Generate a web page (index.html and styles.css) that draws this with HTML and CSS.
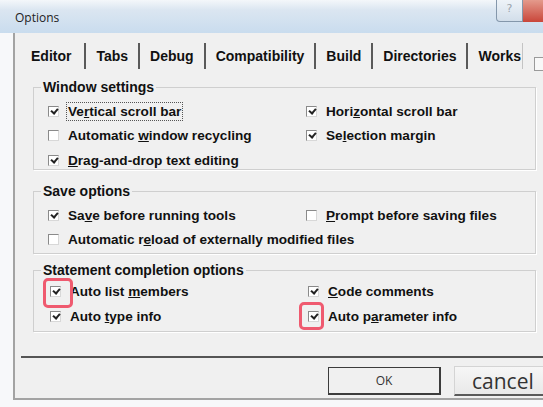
FILE: index.html
```html
<!DOCTYPE html>
<html lang="en">

<head>
    <meta charset="UTF-8">
    <meta name="viewport" content="width=device-width, initial-scale=1.0">
    <title>Options</title>
    <link rel="stylesheet" href="styles.css">
</head>

<body>
    <div class="window">
        <div class="titlebar">
            <span class="title">Options</span>
            <div class="caption-buttons">
                <span class="help-btn">?</span>
                <span class="close-btn"></span>
            </div>
        </div>

        <div class="dialog">
            <div class="tab-strip">
                <div class="tabs">
                    <span class="tab">Editor</span>
                    <span class="tab">Tabs</span>
                    <span class="tab">Debug</span>
                    <span class="tab">Compatibility</span>
                    <span class="tab">Build</span>
                    <span class="tab">Directories</span>
                    <span class="tab last">Works</span>
                </div>
                <span class="tab-scroll"></span>
            </div>

            <div class="page">
                <fieldset class="group window-group">
                    <legend>Window settings</legend>
                    <div class="options">
                        <label class="option"><span class="box checked"></span><span class="focus">Ve<u>r</u>tical scroll bar</span></label>
                        <label class="option"><span class="box checked"></span><span>Hori<u>z</u>ontal scroll bar</span></label>
                        <label class="option"><span class="box"></span><span>Automatic <u>w</u>indow recycling</span></label>
                        <label class="option"><span class="box checked"></span><span>Se<u>l</u>ection margin</span></label>
                        <label class="option"><span class="box checked"></span><span><u>D</u>rag-and-drop text editing</span></label>
                    </div>
                </fieldset>

                <fieldset class="group save-group">
                    <legend>Save options</legend>
                    <div class="options">
                        <label class="option"><span class="box checked"></span><span>Sa<u>v</u>e before running tools</span></label>
                        <label class="option"><span class="box"></span><span><u>P</u>rompt before saving files</span></label>
                        <label class="option wide"><span class="box"></span><span>Automatic r<u>e</u>load of externally modified files</span></label>
                    </div>
                </fieldset>

                <fieldset class="group statement-group">
                    <legend>Statement completion options</legend>
                    <div class="options">
                        <label class="option"><span class="box checked marked-a"></span><span>Auto list <u>m</u>embers</span></label>
                        <label class="option"><span class="box checked"></span><span><u>C</u>ode comments</span></label>
                        <label class="option"><span class="box checked"></span><span>Auto <u>t</u>ype info</span></label>
                        <label class="option"><span class="box checked marked-b"></span><span>Auto p<u>a</u>rameter info</span></label>
                    </div>
                </fieldset>
            </div>

            <div class="footer">
                <button class="btn ok-btn" type="button">OK</button>
                <button class="btn cancel-btn" type="button">cancel</button>
            </div>
        </div>
    </div>
</body>

</html>
```

FILE: styles.css
```css
body {
    margin: 0;
    padding: 0;
    background-color: #ffffff;
    font-family: "Liberation Sans", Arial, sans-serif;
    color: #111111;
}

.window {
    width: 543px;
    height: 407px;
    overflow: hidden;
    background-color: #f7f8fa;
}

/* title bar */

.titlebar {
    height: 33px;
    display: flex;
    justify-content: space-between;
    align-items: flex-start;
    background: linear-gradient(to bottom, #f4f7fa 0%, #dbe6f1 30%, #c9dcee 100%);
}

.title {
    font-family: "Open Sans", sans-serif;
    font-size: 12px;
    color: #222222;
    padding: 9px 0 0 15px;
}

.caption-buttons {
    display: flex;
    margin-right: -20px;
}

.help-btn {
    width: 25px;
    height: 21px;
    border: 1px solid #8497ab;
    border-top: none;
    border-bottom-left-radius: 4px;
    background: linear-gradient(to bottom, #eef3f8, #d2deea);
    color: #9aa3ac;
    font-family: "DejaVu Sans", sans-serif;
    font-size: 11px;
    text-align: center;
    line-height: 18px;
}

.close-btn {
    width: 40px;
    height: 22px;
    background: linear-gradient(to bottom, #e49a8c, #c9463a);
}

/* dialog body */

.dialog {
    width: 600px;
    height: 365px;
    margin-left: 13px;
    border-left: 2px solid #a3a3a3;
    border-bottom: 2px solid #a3a3a3;
    background-color: #f0f0f0;
}

.tab-strip {
    display: flex;
    align-items: flex-start;
    padding-top: 10px;
}

.tabs {
    display: flex;
    width: 491px;
    overflow: hidden;
    padding-left: 16px;
    border-right: 1px solid #c4c4c4;
    white-space: nowrap;
}

.tab {
    font-size: 14px;
    font-weight: bold;
    line-height: 26px;
    padding: 0 10px;
    border-right: 2px solid #5a5a5a;
}

.tab:first-child {
    padding-left: 0;
    padding-right: 13px;
}

.tab.last {
    border-right: none;
}

.tab-scroll {
    width: 10px;
    height: 12px;
    margin: 14px 0 0 11px;
    border: 1px solid #9a9a9a;
    background-color: #f8f8f8;
}

.page {
    width: 503px;
    padding: 8px 0 0 18px;
}

.group {
    margin: 0;
    padding: 0;
    border: 1px solid #cfcfcf;
    box-shadow: 1px 1px 0 #ffffff;
}

.group legend {
    font-size: 14px;
    font-weight: bold;
    line-height: 16px;
    padding: 0 2px;
    margin-left: 7px;
}

.options {
    display: grid;
    grid-template-columns: 258px 1fr;
    row-gap: 6px;
    padding-left: 14px;
}

.window-group .options {
    padding-top: 7px;
    row-gap: 6.5px;
}

.save-group {
    margin-top: 13px;
}

.save-group .options {
    padding-top: 7.5px;
    padding-bottom: 4.5px;
}

.statement-group {
    margin-top: 8px;
}

.statement-group .options {
    padding: 4px 0 6px 16px;
    row-gap: 7px;
}

.option {
    display: flex;
    align-items: center;
    gap: 9px;
    height: 18px;
    font-size: 13.6px;
    font-weight: bold;
    white-space: nowrap;
}

.option.wide {
    grid-column: 1 / 3;
}

.box {
    position: relative;
    flex: none;
    width: 9px;
    height: 9px;
    border: 1px solid #8a8a8a;
    border-right-color: #d8d8d8;
    border-bottom-color: #d8d8d8;
    background-color: #ffffff;
}

.box.checked::before {
    content: "";
    position: absolute;
    left: 1px;
    top: 0px;
    width: 3px;
    height: 5px;
    border-right: 2px solid #222222;
    border-bottom: 2px solid #222222;
    transform: translate(2px, 0) rotate(40deg);
}

.focus {
    outline: 1px dotted #555555;
    outline-offset: 1px;
}

/* red highlight marks */

.marked-a::after,
.marked-b::after {
    content: "";
    position: absolute;
    border: 3px solid #ef5a6f;
    border-radius: 5px;
    box-sizing: border-box;
}

.marked-a::after {
    left: -8px;
    top: -9px;
    width: 30px;
    height: 30px;
}

.marked-b::after {
    left: -10px;
    top: -10px;
    width: 25px;
    height: 28px;
}

/* footer */

.footer {
    margin: 24px 0 0 6px;
    padding: 9px 0 0 307px;
    border-top: 2px solid #555555;
    display: flex;
    align-items: flex-start;
    gap: 13px;
}

.btn {
    font-family: "Open Sans", sans-serif;
    color: #333333;
    background-color: #f0f0f0;
    padding: 0;
}

.ok-btn {
    width: 113px;
    height: 28px;
    border: 1px solid #3c3c3c;
    border-right-width: 2px;
    border-bottom-width: 2px;
    font-size: 12px;
}

.cancel-btn {
    width: 120px;
    height: 30px;
    margin-top: -1px;
    border: 1px solid #d4d4d4;
    border-bottom: 2px solid #5a5a5a;
    background: linear-gradient(to bottom, #f6f6f6, #e9e9e9);
    font-size: 21px;
    line-height: 26px;
    text-align: left;
    padding-left: 17px;
}
```
